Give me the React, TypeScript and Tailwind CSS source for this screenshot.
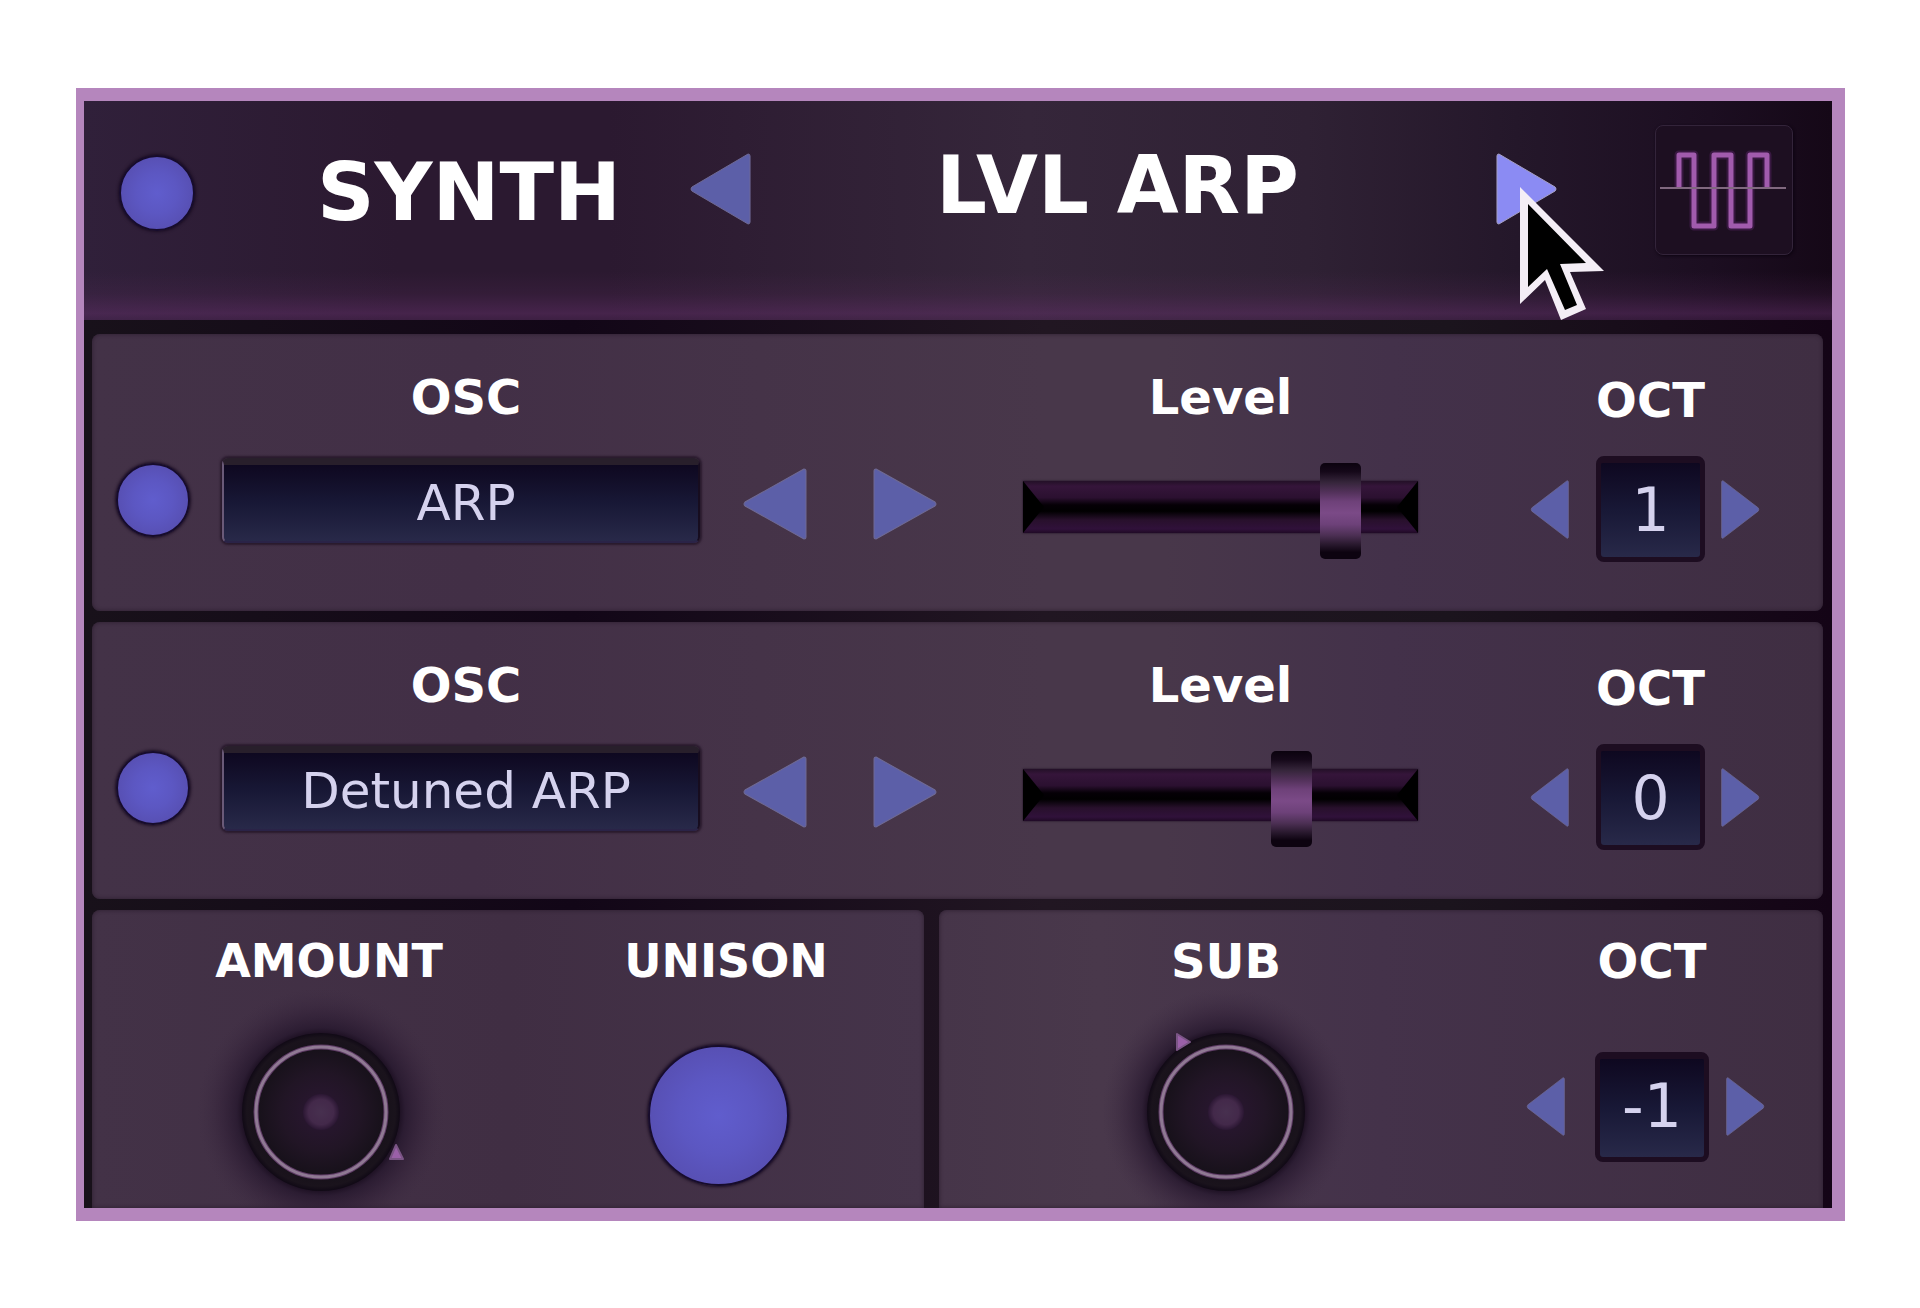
import React, { useState } from "react";

type ArrowProps = {
  direction: "left" | "right";
  label: string;
  className: string;
  active?: boolean;
  onClick?: () => void;
};

const Arrow = ({ direction, label, className, active, onClick }: ArrowProps) => {
  return (
    <button
      type="button"
      aria-label={label}
      onClick={onClick}
      className={`block shrink-0 ${className}`}
    >
      <svg
        viewBox="0 0 64 74"
        preserveAspectRatio="none"
        className="block h-full w-full overflow-visible"
      >
        <path
          d={
            direction === "left"
              ? "M61 2 L3 35 Q1 37 3 39 L61 72 Q63 72 63 70 V4 Q63 2 61 2 Z"
              : "M3 2 L61 35 Q63 37 61 39 L3 72 Q1 72 1 70 V4 Q1 2 3 2 Z"
          }
          fill={active ? "#8b8bf3" : "#5c5fa8"}
          stroke={active ? "#a7a1c4" : "#6f6a94"}
          strokeWidth="1"
        />
      </svg>
    </button>
  );
};

type LedProps = {
  label: string;
  className: string;
};

const Led = ({ label, className }: LedProps) => {
  const [on, setOn] = useState(true);

  return (
    <button
      type="button"
      aria-label={label}
      aria-pressed={on}
      onClick={() => setOn(!on)}
      className={`block shrink-0 rounded-full border-2 border-[#170c2c] shadow-[0_0_3px_1px_#1a0d22] ${
        on
          ? "bg-[radial-gradient(circle,#605dcd_0%,#5c57c2_40%,#574fb2_75%)]"
          : "bg-[#2c2650]"
      } ${className}`}
    />
  );
};

type OctaveProps = {
  id: string;
  initial: number;
  large?: boolean;
};

const Octave = ({ id, initial, large }: OctaveProps) => {
  const [octave, setOctave] = useState(initial);

  return (
    <div className="flex items-end">
      <Arrow
        direction="left"
        label="Octave down"
        onClick={() => setOctave(octave - 1)}
        className={large ? "mr-[30px] mb-[25px] h-[61px] w-[39px]" : "mr-[27px] mb-[22px] h-[61px] w-[39px]"}
      />
      <div className={large ? "flex flex-col items-center gap-[67px]" : "flex flex-col items-center gap-[32px]"}>
        <label htmlFor={id} className="text-5xl leading-[48px] font-bold text-white">
          OCT
        </label>
        <input
          id={id}
          type="text"
          readOnly
          value={octave}
          className={`rounded-lg border-[5px] border-t-[7px] border-[#1d0d21] bg-linear-to-b from-[#0e0820] via-[#181836] to-[#282949] text-center text-[#d5d2ee] outline-none ${
            large ? "h-[110px] w-[114px] pb-1 text-[60px]" : "h-[106px] w-[109px] text-[60px]"
          }`}
        />
      </div>
      <Arrow
        direction="right"
        label="Octave up"
        onClick={() => setOctave(octave + 1)}
        className={large ? "ml-[17px] mb-[25px] h-[61px] w-[39px]" : "ml-[16px] mb-[22px] h-[61px] w-[39px]"}
      />
    </div>
  );
};

type OscillatorProps = {
  id: string;
  first: number;
  level: number;
  octave: number;
};

const WAVES = ["ARP", "Detuned ARP"];

const Oscillator = ({ id, first, level, octave }: OscillatorProps) => {
  const [wave, setWave] = useState(first);
  const [value, setValue] = useState(level);

  const step = () => setWave((wave + 1) % WAVES.length);

  return (
    <section className="grid h-[277px] grid-cols-[130fr_478fr_323fr_395fr_405fr] items-start rounded-lg bg-[linear-gradient(90deg,#433247_0%,#422f46_22%,#48374a_55%,#48374a_62%,#43314a_75%,#3f2e42_100%)] pt-[39px] shadow-[inset_0_0_4px_#2b1d2e]">
      <div className="pt-[90px] pl-[24px]">
        <Led label="Oscillator on" className="h-[74px] w-[74px]" />
      </div>
      <div className="flex flex-col gap-[37px]">
        <label htmlFor={`${id}-wave`} className="pl-[10px] text-center text-5xl leading-[48px] font-bold text-white">
          OSC
        </label>
        <input
          id={`${id}-wave`}
          type="text"
          readOnly
          value={WAVES[wave]}
          className="h-[85px] w-full min-w-0 rounded-md border-x-2 border-t-[7px] border-b-2 border-t-[#281f2b] border-r-[#170d1f] border-b-[#2a2347] border-l-[#6a5a78] bg-linear-to-b from-[#0e0820] via-[#181836] to-[#282949] pl-[10px] text-center text-[50px] leading-[76px] text-[#d5d2ee] shadow-[0_0_2px_2px_#2a1b2e] outline-none"
        />
      </div>
      <div className="flex gap-[66px] pt-[94px] pl-[42px]">
        <Arrow direction="left" label="Previous wave" onClick={step} className="h-[74px] w-[65px]" />
        <Arrow direction="right" label="Next wave" onClick={step} className="h-[74px] w-[65px]" />
      </div>
      <div className="flex flex-col gap-[42px]">
        <label htmlFor={`${id}-level`} className="text-center text-5xl leading-[48px] font-bold text-white">
          Level
        </label>
        <div className="relative">
          <div className="absolute inset-x-0 top-[18px] flex h-[52px] justify-between bg-[linear-gradient(180deg,#231027_0%,#35153a_10%,#2b1030_32%,#050006_46%,#010001_58%,#28102c_75%,#30113a_92%,#200a26_100%)] shadow-[0_0_2px_#1c0f20]">
            <div className="w-[21px] bg-black [clip-path:polygon(0_0,100%_50%,0_100%)]" />
            <div className="w-[21px] bg-black [clip-path:polygon(100%_0,0_50%,100%_100%)]" />
          </div>
          <input
            id={`${id}-level`}
            type="range"
            min={0}
            max={100}
            value={value}
            onChange={(e) => setValue(Number(e.target.value))}
            className="relative block h-[96px] w-full appearance-none bg-transparent [&::-webkit-slider-thumb]:h-[96px] [&::-webkit-slider-thumb]:w-[41px] [&::-webkit-slider-thumb]:appearance-none [&::-webkit-slider-thumb]:rounded-[5px] [&::-webkit-slider-thumb]:bg-[linear-gradient(180deg,#0b020e_0%,#150819_9%,#35253a_20%,#54325c_31%,#6e4179_40%,#7b4a87_52%,#6d4179_64%,#4d3055_75%,#2c1b31_84%,#0d0310_93%,#0d0310_100%)]"
          />
        </div>
      </div>
      <div className="pt-[3px] pl-[112px]">
        <Octave id={`${id}-oct`} initial={octave} />
      </div>
    </section>
  );
};

type KnobProps = {
  id: string;
  label: string;
  value: number;
  pointer: string;
};

const Knob = ({ id, label, value, pointer }: KnobProps) => {
  return (
    <div className="relative h-[158px] w-[158px]">
      <svg viewBox="-79 -79 158 158" className="block h-full w-full overflow-visible">
        <defs>
          <radialGradient id={`${id}-glow`}>
            <stop offset="0.62" stopColor="#190d1e" stopOpacity="1" />
            <stop offset="0.68" stopColor="#22142a" stopOpacity="0.7" />
            <stop offset="0.82" stopColor="#2a1931" stopOpacity="0.35" />
            <stop offset="1" stopColor="#3a2940" stopOpacity="0" />
          </radialGradient>
          <radialGradient id={`${id}-body`}>
            <stop offset="0" stopColor="#2b1733" />
            <stop offset="0.5" stopColor="#211525" />
            <stop offset="0.8" stopColor="#17111a" />
            <stop offset="0.94" stopColor="#1a131c" />
            <stop offset="1" stopColor="#100915" />
          </radialGradient>
          <radialGradient id={`${id}-dot`}>
            <stop offset="0" stopColor="#47304f" />
            <stop offset="0.7" stopColor="#43294a" />
            <stop offset="1" stopColor="#2b1733" />
          </radialGradient>
        </defs>
        <circle r="124" fill={`url(#${id}-glow)`} />
        <circle r="79" fill={`url(#${id}-body)`} />
        <circle r="65" fill="none" stroke="#5f3c66" strokeWidth="5" />
        <circle r="65" fill="none" stroke="#8f7993" strokeWidth="3" />
        <circle r="18" fill={`url(#${id}-dot)`} />
        <polygon points={pointer} fill="#9a60a8" stroke="#7a5585" strokeWidth="2" strokeLinejoin="round" />
      </svg>
      <input
        id={id}
        type="range"
        aria-label={label}
        defaultValue={value}
        className="absolute inset-0 h-full w-full cursor-pointer opacity-0"
      />
    </div>
  );
};

const Header = () => {
  return (
    <header className="grid h-[219px] grid-cols-[233fr_372fr_247fr_560fr_159fr_177fr] items-start bg-[linear-gradient(180deg,transparent_78%,#5a2c5c30_88%,#64306a78_97%,#5a2a6060_100%),linear-gradient(90deg,#30203a_0%,#2b1930_18%,#2b1930_30%,#35263a_54%,#2f2134_70%,#24172a_82%,#1c0e21_93%,#150817_100%)]">
      <div className="pt-[54px] pl-[35px]">
        <Led label="Synth on" className="h-[76px] w-[76px]" />
      </div>
      <h1 className="pt-[52px] text-[80px] leading-[80px] font-bold whitespace-nowrap text-white">SYNTH</h1>
      <div className="pt-[51px]">
        <Arrow direction="left" label="Previous preset" className="h-[74px] w-[62px]" />
      </div>
      <p className="pt-[45px] text-[80px] leading-[80px] font-bold whitespace-nowrap text-white">LVL ARP</p>
      <div className="relative pt-[51px]">
        <Arrow direction="right" label="Next preset" active className="h-[74px] w-[62px]" />
        <svg viewBox="0 0 86 136" className="pointer-events-none absolute top-[86px] left-[23px] z-10 h-[136px] w-[86px]">
          <polygon points="1,0 85,84 51,85 67,122 42,133 26,93 1,117" fill="#f4eef6" />
          <polygon points="9,17 67,76 41,77 58,118 46,123 28,82 9,100" fill="#000" />
        </svg>
      </div>
      <div className="pt-[24px]">
        <button
          type="button"
          aria-label="Waveform"
          className="block h-[130px] w-[138px] rounded-lg border border-[#33243a] bg-[#1d0f21] shadow-[1px_1px_3px_#0d0411]"
        >
          <svg viewBox="0 0 136 128" className="block h-full w-full" fill="none">
            <path
              d="M23 61 V29 H38 V100 H58 V29 H75 V100 H94 V29 H111 V61"
              stroke="#5b2468"
              strokeWidth="9"
              strokeOpacity="0.45"
              strokeLinejoin="round"
            />
            <path
              d="M23 61 V29 H38 V100 H58 V29 H75 V100 H94 V29 H111 V61"
              stroke="#a15bad"
              strokeWidth="5"
              strokeLinejoin="round"
            />
            <path d="M4 62 H130" stroke="#80687f" strokeWidth="2" />
          </svg>
        </button>
      </div>
    </header>
  );
};

const App = () => {
  return (
    <main className="min-h-screen bg-white pt-[88px] pr-[75px] pb-[87px] pl-[76px] font-['DejaVu_Sans',sans-serif]">
      <div className="overflow-hidden border-t-[13px] border-r-[13px] border-b-[13px] border-l-[8px] border-[#b586bd] bg-[linear-gradient(90deg,#18111a_0%,#120617_28%,#211622_55%,#1b141d_78%,#140416_100%)]">
        <Header />
        <div className="flex flex-col gap-[11px] pt-[14px] pr-[9px] pl-[8px]">
          <Oscillator id="osc1" first={0} level={84} octave={1} />
          <Oscillator id="osc2" first={1} level={70} octave={0} />
          <div className="grid grid-cols-[832fr_884fr] gap-[15px]">
            <section className="grid h-[298px] grid-cols-[458fr_336fr_38fr] items-start rounded-t-lg bg-[linear-gradient(90deg,#433247_0%,#402e43_50%,#45344a_100%)] pt-[27px] shadow-[inset_0_0_4px_#2b1d2e]">
              <div className="flex flex-col items-center gap-[48px]">
                <label htmlFor="amount" className="pl-4 text-[46px] leading-[48px] font-bold text-white">
                  AMOUNT
                </label>
                <Knob id="amount" label="Amount" value={90} pointer="75,33 82,47 69,47" />
              </div>
              <div className="flex flex-col items-center gap-[60px]">
                <span className="pl-4 text-[46px] leading-[48px] font-bold text-white">UNISON</span>
                <Led label="Unison" className="h-[141px] w-[141px]" />
              </div>
            </section>
            <section className="grid h-[298px] grid-cols-[574fr_310fr] items-start rounded-t-lg bg-[linear-gradient(90deg,#463549_0%,#49384b_18%,#44324a_50%,#3f2e42_100%)] pt-[27px] shadow-[inset_0_0_4px_#2b1d2e]">
              <div className="flex flex-col items-center gap-[48px]">
                <label htmlFor="sub" className="text-5xl leading-[48px] font-bold text-white">
                  SUB
                </label>
                <Knob id="sub" label="Sub" value={40} pointer="-49,-78 -36,-70 -49,-62" />
              </div>
              <div className="pl-[13px]">
                <Octave id="sub-oct" initial={-1} large />
              </div>
            </section>
          </div>
        </div>
      </div>
    </main>
  );
};

export default App;
